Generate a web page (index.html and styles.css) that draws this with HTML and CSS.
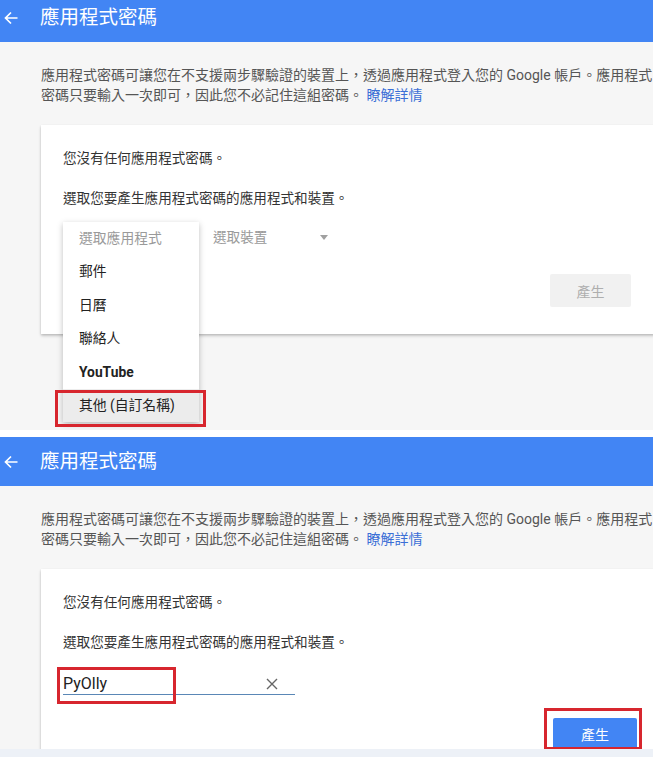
FILE: index.html
```html
<!DOCTYPE html>
<html lang="zh-Hant">
<head>
<meta charset="utf-8">
<title>應用程式密碼</title>
<link rel="stylesheet" href="styles.css">
</head>
<body>
<div class="shot shot-top">
  <div class="app app-shift">
    <header class="appbar">
      <svg class="back" viewBox="0 0 14 14" width="14" height="14"><path d="M13.5 7H1.5M7 1.5L1.5 7L7 12.5" fill="none" stroke="#fff" stroke-width="1.7"/></svg>
      <h1 class="title">應用程式密碼</h1>
    </header>
    <p class="intro">應用程式密碼可讓您在不支援兩步驟驗證的裝置上，透過應用程式登入您的 Google 帳戶。應用程式<br>密碼只要輸入一次即可，因此您不必記住這組密碼。 <a class="link" href="#">瞭解詳情</a></p>
    <section class="card">
      <p class="msg">您沒有任何應用程式密碼。</p>
      <p class="msg">選取您要產生應用程式密碼的應用程式和裝置。</p>
      <div class="fields">
        <div class="select select-app"></div>
        <div class="select select-device">選取裝置<span class="caret"></span></div>
      </div>
      <div class="actions"><button class="btn btn-disabled">產生</button></div>
      <ul class="menu">
        <li class="menu-item menu-item-placeholder">選取應用程式</li>
        <li class="menu-item">郵件</li>
        <li class="menu-item">日曆</li>
        <li class="menu-item">聯絡人</li>
        <li class="menu-item menu-item-strong">YouTube</li>
        <li class="menu-item menu-item-active">其他 (自訂名稱)</li>
      </ul>
    </section>
  </div>
  <div class="mark mark-menu"></div>
</div>
<div class="gap"></div>
<div class="shot shot-bottom">
  <div class="app">
    <header class="appbar">
      <svg class="back" viewBox="0 0 14 14" width="14" height="14"><path d="M13.5 7H1.5M7 1.5L1.5 7L7 12.5" fill="none" stroke="#fff" stroke-width="1.7"/></svg>
      <h1 class="title">應用程式密碼</h1>
    </header>
    <p class="intro">應用程式密碼可讓您在不支援兩步驟驗證的裝置上，透過應用程式登入您的 Google 帳戶。應用程式<br>密碼只要輸入一次即可，因此您不必記住這組密碼。 <a class="link" href="#">瞭解詳情</a></p>
    <section class="card">
      <p class="msg">您沒有任何應用程式密碼。</p>
      <p class="msg">選取您要產生應用程式密碼的應用程式和裝置。</p>
      <div class="fields">
        <div class="input">
          <span class="input-value">PyOlly</span>
          <svg class="clear" viewBox="0 0 12 12" width="12" height="12"><path d="M1 1L11 11M11 1L1 11" fill="none" stroke="#666" stroke-width="1.4"/></svg>
        </div>
      </div>
      <div class="actions"><button class="btn btn-primary">產生</button></div>
    </section>
  </div>
  <div class="mark mark-input"></div>
  <div class="mark mark-btn"></div>
</div>
<div class="strip"></div>
</body>
</html>
```
FILE: styles.css
```css
html, body {
  margin: 0;
  padding: 0;
}
body {
  width: 653px;
  height: 757px;
  overflow: hidden;
  background: #fff;
  font-family: Roboto, "Noto Sans CJK TC", sans-serif;
}
.shot {
  position: relative;
  overflow: hidden;
}
.shot-top {
  height: 430px;
}
.shot-bottom {
  height: 312px;
}
.gap {
  height: 7px;
  background: #fff;
}
.strip {
  height: 8px;
  background: #edf1f7;
}
.app {
  width: 720px;
  min-height: 460px;
  background: #f6f6f6;
}
.app-shift {
  margin-top: -7px;
}
.appbar {
  height: 49px;
  background: #4285f4;
  display: flex;
  align-items: center;
  gap: 22px;
  padding-left: 4px;
  color: #fff;
}
.back {
  display: block;
  flex: none;
}
.title {
  margin: 0;
  font-size: 19.5px;
  font-weight: 400;
  line-height: 26px;
}
.intro {
  margin: 0;
  padding: 23px 0 0 41px;
  font-size: 14px;
  line-height: 20px;
  color: #555;
  white-space: nowrap;
}
.link {
  color: #3b6fd6;
  text-decoration: none;
}
.card {
  position: relative;
  box-sizing: border-box;
  width: 614px;
  margin: 20px 0 0 41px;
  padding: 23px 24px 27px 22px;
  background: #fff;
  box-shadow: 0 1px 2px rgba(0,0,0,.12), 0 2px 3px rgba(0,0,0,.16);
}
.msg {
  margin: 0;
  font-size: 13.6px;
  line-height: 20px;
  color: #333;
}
.msg + .msg {
  margin-top: 20px;
}
.fields {
  display: flex;
  margin-top: 16px;
  height: 27px;
}
.select {
  box-sizing: border-box;
  padding-top: 3px;
  font-size: 13.6px;
  line-height: 20px;
  color: #9a9a9a;
}
.select-app {
  width: 150px;
}
.select-device {
  width: 120px;
  display: flex;
  align-items: center;
  height: 23px;
}
.caret {
  width: 0;
  height: 0;
  margin-left: auto;
  margin-right: 5px;
  border-left: 4px solid transparent;
  border-right: 4px solid transparent;
  border-top: 5px solid #a0a0a0;
}
.input {
  box-sizing: border-box;
  width: 232px;
  height: 27px;
  padding-top: 6px;
  display: flex;
  align-items: center;
  border-bottom: 1.5px solid #5a87b6;
}
.input-value {
  font-size: 16px;
  line-height: 20px;
  color: #222;
}
.clear {
  display: block;
  margin-left: auto;
  margin-right: 17px;
}
.actions {
  display: flex;
  justify-content: flex-end;
  margin-top: 23px;
}
.btn {
  border: 0;
  border-radius: 2px;
  font-family: inherit;
  font-size: 14px;
  padding: 0;
  height: 33px;
}
.btn-disabled {
  width: 81px;
  background: #f1f1f1;
  color: #aeaeae;
}
.btn-primary {
  width: 84px;
  height: 32px;
  margin-right: -6px;
  background: #4285f4;
  color: #fff;
}
.menu {
  position: absolute;
  top: 97px;
  left: 22px;
  width: 136px;
  margin: 0;
  padding: 0;
  list-style: none;
  background: #fff;
  box-shadow: 0 2px 6px rgba(0,0,0,.25);
}
.menu-item {
  height: 33.4px;
  line-height: 33.4px;
  padding-left: 16px;
  font-size: 13.8px;
  color: #222;
  white-space: nowrap;
}
.menu-item-placeholder {
  color: #9a9a9a;
}
.menu-item-strong {
  font-weight: 700;
}
.menu-item-active {
  background: #ececec;
}
.mark {
  position: absolute;
  box-sizing: border-box;
  border: 3px solid #d7262e;
}
.mark-menu {
  left: 55px;
  top: 390px;
  width: 151px;
  height: 37px;
}
.mark-input {
  left: 57px;
  top: 230px;
  width: 119px;
  height: 37px;
}
.mark-btn {
  left: 544px;
  top: 271px;
  width: 98px;
  height: 42px;
}
```
